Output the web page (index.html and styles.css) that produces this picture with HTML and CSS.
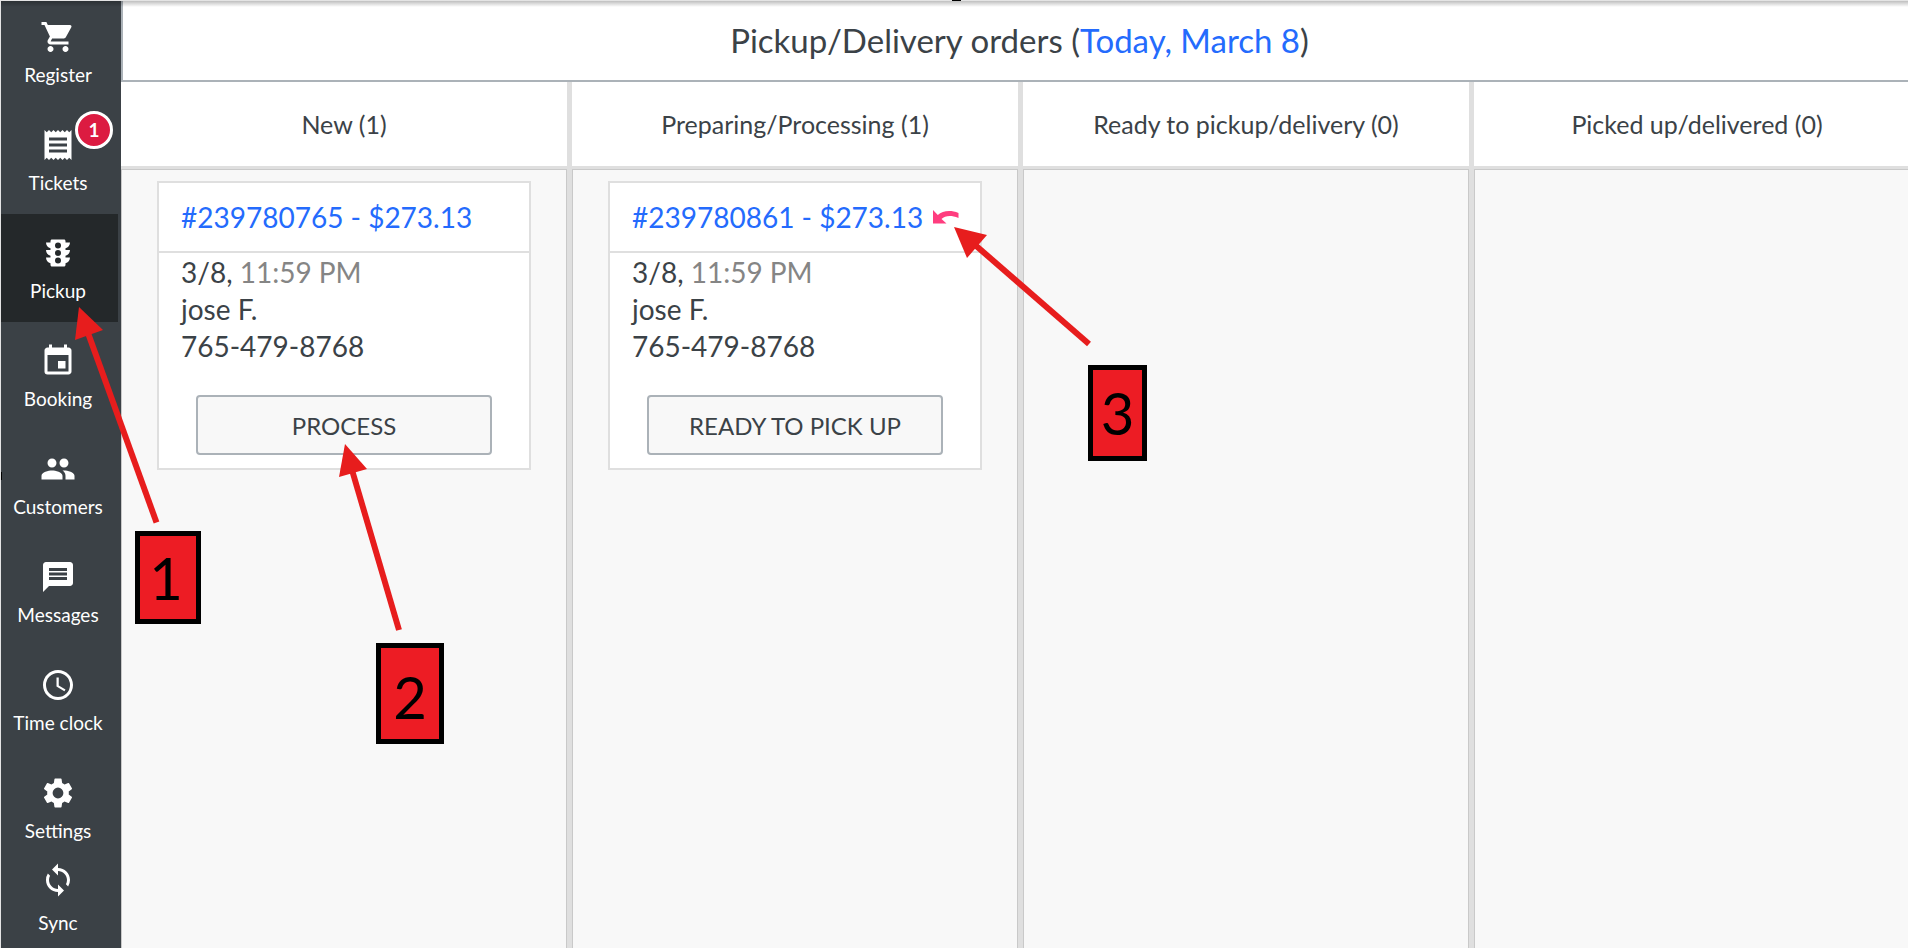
FILE: index.html
```html
<!DOCTYPE html>
<html lang="en">
<head>
<meta charset="utf-8">
<title>Pickup/Delivery orders</title>
<link rel="stylesheet" href="styles.css">
</head>
<body>
<div class="app">
  <nav class="sidebar">
    <a class="nav-item" href="#">
      <svg class="icon" viewBox="0 0 24 24"><path d="M7 18c-1.1 0-1.99.9-1.99 2S5.9 22 7 22s2-.9 2-2-.9-2-2-2zM1 2v2h2l3.6 7.59-1.35 2.45c-.16.28-.25.61-.25.96 0 1.1.9 2 2 2h12v-2H7.42c-.14 0-.25-.11-.25-.25l.03-.12.9-1.63h7.45c.75 0 1.41-.41 1.75-1.03l3.58-6.49A1 1 0 0 0 20 4H5.21l-.94-2H1zm16 16c-1.1 0-1.99.9-1.99 2s.89 2 1.99 2 2-.9 2-2-.9-2-2-2z"/></svg>
      <span>Register</span>
    </a>
    <a class="nav-item" href="#">
      <svg class="icon" viewBox="0 0 24 24"><path d="M18 17H6v-2h12v2zm0-4H6v-2h12v2zm0-4H6V7h12v2zM3 22l1.5-1.5L6 22l1.5-1.5L9 22l1.5-1.5L12 22l1.5-1.5L15 22l1.5-1.5L18 22l1.5-1.5L21 22V2l-1.500 1.500L18 2l-1.500 1.500L15 2l-1.500 1.500L12 2l-1.500 1.500L9 2 7.500 3.500 6 2 4.500 3.500 3 2v20z"/></svg>
      <span>Tickets</span>
      <span class="badge">1</span>
    </a>
    <a class="nav-item active" href="#">
      <svg class="icon" viewBox="0 0 24 24"><path d="M20 10h-3V8.860c1.720-.45 3-2 3-3.860h-3V4c0-.55-.45-1-1-1H8c-.55 0-1 .45-1 1v1H4c0 1.860 1.280 3.410 3 3.860V10H4c0 1.860 1.280 3.410 3 3.860V15H4c0 1.860 1.280 3.410 3 3.860V20c0 .55.45 1 1 1h8c.55 0 1-.45 1-1v-1.140c1.720-.45 3-2 3-3.860h-3v-1.140c1.720-.45 3-2 3-3.860zm-8 9a2 2 0 1 1 0-4 2 2 0 0 1 0 4zm0-5a2 2 0 1 1 0-4 2 2 0 0 1 0 4zm0-5a2 2 0 1 1 0-4 2 2 0 0 1 0 4z"/></svg>
      <span>Pickup</span>
    </a>
    <a class="nav-item" href="#">
      <svg class="icon" viewBox="0 0 24 24"><path d="M17 12h-5v5h5v-5zM16 1v2H8V1H6v2H5c-1.110 0-1.990.9-1.990 2L3 19a2 2 0 0 0 2 2h14c1.100 0 2-.9 2-2V5c0-1.100-.9-2-2-2h-1V1h-2zm3 18H5V8h14v11z"/></svg>
      <span>Booking</span>
    </a>
    <a class="nav-item" href="#">
      <svg class="icon" viewBox="0 0 24 24"><path d="M16 11c1.660 0 2.990-1.340 2.990-3S17.660 5 16 5s-3 1.340-3 3 1.340 3 3 3zm-8 0c1.660 0 2.990-1.340 2.990-3S9.660 5 8 5 5 6.340 5 8s1.340 3 3 3zm0 2c-2.330 0-7 1.170-7 3.500V19h14v-2.500C15 14.170 10.330 13 8 13zm8 0c-.29 0-.62.020-.97.050 1.160.840 1.970 1.970 1.970 3.450V19h6v-2.500c0-2.330-4.670-3.500-7-3.500z"/></svg>
      <span>Customers</span>
    </a>
    <a class="nav-item" href="#">
      <svg class="icon" viewBox="0 0 24 24"><path d="M20 2H4c-1.100 0-1.990.9-1.990 2L2 22l4-4h14c1.100 0 2-.9 2-2V4c0-1.100-.9-2-2-2zm-2 12H6v-2h12v2zm0-3H6V9h12v2zm0-3H6V6h12v2z"/></svg>
      <span>Messages</span>
    </a>
    <a class="nav-item" href="#">
      <svg class="icon" viewBox="0 0 24 24"><path d="M11.990 2C6.470 2 2 6.480 2 12s4.470 10 9.990 10C17.520 22 22 17.520 22 12S17.520 2 11.990 2zM12 20a8 8 0 1 1 0-16 8 8 0 0 1 0 16zm.5-13H11v6l5.250 3.150.75-1.230-4.500-2.670z"/></svg>
      <span>Time clock</span>
    </a>
    <a class="nav-item" href="#">
      <svg class="icon" viewBox="0 0 24 24"><path d="M19.140 12.940c.04-.3.06-.61.06-.94s-.02-.64-.07-.94l2.030-1.580a.49.49 0 0 0 .12-.61l-1.920-3.320a.488.488 0 0 0-.59-.22l-2.390.96a7.300 7.300 0 0 0-1.620-.94l-.36-2.540a.484.484 0 0 0-.48-.41h-3.840c-.24 0-.43.170-.47.410l-.36 2.540c-.59.240-1.130.570-1.620.940l-2.390-.96a.48.48 0 0 0-.59.220L2.740 8.870a.47.47 0 0 0 .12.610l2.030 1.580c-.05.300-.09.630-.09.940s.02.640.07.940l-2.030 1.580a.49.49 0 0 0-.12.610l1.920 3.320c.12.220.37.290.59.220l2.390-.96c.5.380 1.030.700 1.620.940l.36 2.540c.05.240.24.410.48.410h3.840c.24 0 .44-.17.470-.41l.36-2.540c.59-.24 1.130-.56 1.620-.94l2.390.96c.22.080.47 0 .59-.22l1.920-3.320a.47.47 0 0 0-.12-.61l-2.010-1.580zM12 15.600a3.600 3.600 0 1 1 0-7.200 3.600 3.600 0 0 1 0 7.200z"/></svg>
      <span>Settings</span>
    </a>
    <a class="nav-item sync" href="#">
      <svg class="icon" viewBox="0 0 24 24"><path d="M12 4V1L8 5l4 4V6c3.310 0 6 2.690 6 6 0 1.010-.25 1.970-.7 2.800l1.460 1.460A7.930 7.930 0 0 0 20 12c0-4.420-3.580-8-8-8zm0 14c-3.310 0-6-2.690-6-6 0-1.010.25-1.970.7-2.800L5.240 7.740A7.930 7.930 0 0 0 4 12c0 4.420 3.580 8 8 8v3l4-4-4-4v3z"/></svg>
      <span>Sync</span>
    </a>
  </nav>

  <main class="main">
    <h1 class="title">Pickup/Delivery orders (<a href="#">Today, March 8</a>)</h1>
    <div class="board">
      <section class="column">
        <h2>New (1)</h2>
        <div class="lane">
          <article class="card">
            <header><a href="#">#239780765 - $273.13</a></header>
            <div class="details">
              <p>3/8, <span class="time">11:59 PM</span></p>
              <p>jose F.</p>
              <p>765-479-8768</p>
            </div>
            <button type="button">PROCESS</button>
          </article>
        </div>
      </section>
      <section class="column">
        <h2>Preparing/Processing (1)</h2>
        <div class="lane">
          <article class="card">
            <header>
              <a href="#">#239780861 - $273.13</a>
              <button type="button" class="undo" aria-label="Undo">
                <svg viewBox="0 0 26 14"><path d="M0 0v13.500h13.500L8.500 9C12 6 17 4.500 25.500 8V3C17 -.5 9.500 1 4.800 5z"/></svg>
              </button>
            </header>
            <div class="details">
              <p>3/8, <span class="time">11:59 PM</span></p>
              <p>jose F.</p>
              <p>765-479-8768</p>
            </div>
            <button type="button">READY TO PICK UP</button>
          </article>
        </div>
      </section>
      <section class="column">
        <h2>Ready to pickup/delivery (0)</h2>
        <div class="lane"></div>
      </section>
      <section class="column">
        <h2>Picked up/delivered (0)</h2>
        <div class="lane"></div>
      </section>
    </div>
  </main>

  <div class="top-shadow"></div>
  <span class="handle handle-top"></span>
  <span class="handle handle-left"></span>

  <svg class="arrows" width="1100" height="640" viewBox="0 0 1100 640">
    <g stroke="#e71d1d" stroke-width="6" fill="#e71d1d">
      <path d="M156.500 522.500L88 333"/>
      <path d="M399 630L352 470"/>
      <path d="M1089 344L974 244"/>
      <g stroke="none">
        <path d="M79 307L75 340 103 330z"/>
        <path d="M345 444L339 477 367 469z"/>
        <path d="M954 227L987 235 967 258z"/>
      </g>
    </g>
  </svg>
  <div class="step step-1">1</div>
  <div class="step step-2">2</div>
  <div class="step step-3">3</div>
</div>
</body>
</html>
```
FILE: styles.css
```css
* {
  box-sizing: border-box;
}

body {
  margin: 0;
  font-family: Lato, "Open Sans", sans-serif;
  color: #3b4247;
  background: #f8f8f8;
}

a {
  color: #246bfd;
  text-decoration: none;
}

.app {
  position: relative;
  display: flex;
  height: 100vh;
  overflow: hidden;
  border-left: 1px solid #e4e4e4;
}

/* Sidebar */
.sidebar {
  flex: none;
  width: 120px;
  padding-right: 3px;
  background: #3b4146;
}

.nav-item {
  position: relative;
  display: flex;
  flex-direction: column;
  align-items: center;
  gap: 8px;
  height: 108px;
  padding: 21px 3px 0 0;
  font-size: 19px;
  line-height: 24px;
  color: #fff;
}

.nav-item:first-child {
  height: 106px;
  padding-top: 19px;
}

.nav-item.active {
  background: #24282a;
}

.nav-item.sync {
  gap: 13px;
  height: 86px;
  padding-top: 0;
}

.icon {
  width: 36px;
  height: 36px;
  fill: currentColor;
}

.badge {
  position: absolute;
  top: 5px;
  left: 74px;
  width: 38px;
  height: 38px;
  border: 3px solid #fff;
  border-radius: 50%;
  background: #dc1b41;
  font-weight: 700;
  line-height: 32px;
  text-align: center;
}

/* Orders board */
.main {
  flex: 1;
  min-width: 0;
  display: flex;
  flex-direction: column;
}

.title {
  margin: 0;
  padding: 0 0 0 8px;
  height: 82px;
  border-left: 2px solid #abb2b8;
  border-bottom: 2px solid #abb2b8;
  background: #fff;
  font-size: 33px;
  font-weight: 400;
  line-height: 80px;
  text-align: center;
}

.board {
  flex: 1;
  display: grid;
  grid-template-columns: repeat(4, 1fr);
  width: calc(100% + 17px);
}

.column {
  display: flex;
  flex-direction: column;
  border-right: 5px solid #dfdfdf;
}

.column h2 {
  margin: 0;
  border-bottom: 3px solid #dfdfdf;
  background: #fff;
  font-size: 25px;
  font-weight: 400;
  line-height: 84px;
  text-align: center;
}

.lane {
  flex: 1;
  padding: 11px 35px;
  border: 1px solid #c9c9c9;
  border-bottom: 0;
}

.card {
  padding-bottom: 13px;
  border: 2px solid #dfdfdf;
  background: #fff;
  font-size: 28px;
}

.card header {
  display: flex;
  align-items: center;
  gap: 10px;
  height: 70px;
  padding-left: 22px;
  border-bottom: 2px solid #dfdfdf;
}

.undo {
  padding: 0;
  border: 0;
  background: none;
  line-height: 0;
}

.undo svg {
  width: 26px;
  height: 14px;
  fill: #ff3d7f;
}

.details {
  padding: 1px 22px 30px;
  line-height: 37px;
}

.details p {
  margin: 0;
}

.time {
  color: #858585;
}

.card > button {
  display: block;
  width: 80%;
  height: 60px;
  margin: 0 auto;
  border: 2px solid #abb2b8;
  border-radius: 4px;
  background: #f8f8f8;
  font: 24px Lato, "Open Sans", sans-serif;
  color: #3b4247;
}

/* Overlays */
.top-shadow {
  position: absolute;
  top: 0;
  left: 0;
  right: 0;
  height: 7px;
  border-top: 1px solid #e4e4e4;
  background: linear-gradient(rgba(0, 0, 0, 0.25), rgba(0, 0, 0, 0));
}

.handle {
  position: absolute;
  background: #000;
}

.handle-top {
  top: 0;
  left: 951px;
  width: 9px;
  height: 1px;
}

.handle-left {
  top: 472px;
  left: -1px;
  width: 2px;
  height: 8px;
}

.arrows {
  position: absolute;
  top: 0;
  left: -1px;
}

.step {
  position: absolute;
  display: flex;
  align-items: center;
  justify-content: center;
  border: 5px solid #000;
  background: #ed1c24;
  font-size: 58px;
  line-height: 1;
  color: #000;
}

.step-1 {
  top: 531px;
  left: 134px;
  width: 66px;
  height: 93px;
  padding-right: 4px;
}

.step-2 {
  top: 643px;
  left: 375px;
  width: 68px;
  height: 101px;
  padding-top: 6px;
}

.step-3 {
  top: 365px;
  left: 1087px;
  width: 59px;
  height: 96px;
}
```
